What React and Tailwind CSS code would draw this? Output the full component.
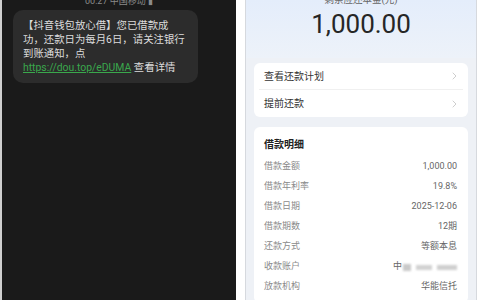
import React from 'react'

const details = [
  { label: '借款金额', value: '1,000.00' },
  { label: '借款年利率', value: '19.8%' },
  { label: '借款日期', value: '2025-12-06' },
  { label: '借款期数', value: '12期' },
  { label: '还款方式', value: '等额本息' },
  { label: '收款账户', value: null },
  { label: '放款机构', value: '华能信托' },
]

const font = { fontFamily: "Roboto, 'Noto Sans CJK SC', sans-serif" }

const Chevron = () => (
  <svg width="5" height="8" viewBox="0 0 5 8" fill="none">
    <path d="M1 1l3 3-3 3" stroke="#c8c8c8" strokeWidth="0.9" strokeLinecap="round" strokeLinejoin="round" />
  </svg>
)

const SmsPanel = () => (
  <div className="w-[236px] h-full bg-[#1a1a1a] border-l-2 border-[#cfcfcf] flex flex-col overflow-hidden">
    <div className="-mt-[5px] h-[12px] text-center text-[9px] leading-[12px] text-[#8a8a8a]">
      00:27 中国移动 ▮
    </div>
    <div className="ml-[11px] mt-[3px] w-[185px] rounded-[10px] bg-[#2c2c2c] px-[10px] pt-[9px] pb-[8px] text-[10.4px] leading-[14px] text-[#dcdcdc]">
      <div>【抖音钱包放心借】您已借款成</div>
      <div>功，还款日为每月6日，请关注银行</div>
      <div>到账通知，点</div>
      <div className="whitespace-nowrap">
        <span className="text-[#3aa84c] underline">https://dou.top/eDUMA</span> 查看详情
      </div>
    </div>
  </div>
)

const LoanPanel = () => (
  <div className="flex h-full">
    <div className="w-[9px] bg-white" />
    <div className="w-[232px] h-full border-x border-[#d6d9de] bg-[#eef1f6] flex flex-col overflow-hidden">
      <div className="h-[58px] shrink-0 bg-gradient-to-b from-[#e4edfb] to-[#edf2f9] flex flex-col items-center">
        <div className="-mt-[6px] text-[9.5px] leading-[12px] text-[#666]">剩余应还本金(元)</div>
        <div className="mt-[3px] text-[26px] leading-[30px] font-normal text-[#262626]">1,000.00</div>
      </div>
      <div className="mx-[8px] mt-[5px] shrink-0 rounded-[6px] bg-white">
        <div className="mx-[5px] flex h-[27px] items-center justify-between border-b border-[#f0f0f0] pl-[5px] pr-[6px]">
          <span className="text-[10px] text-[#333]">查看还款计划</span>
          <Chevron />
        </div>
        <div className="mx-[5px] flex h-[27px] items-center justify-between pl-[5px] pr-[6px]">
          <span className="text-[10px] text-[#333]">提前还款</span>
          <Chevron />
        </div>
      </div>
      <div className="mx-[8px] mt-[10px] shrink-0 rounded-[6px] bg-white px-[10px] pt-[9px] pb-[6px]">
        <div className="h-[18px] text-[10px] leading-[18px] font-bold text-[#222]">借款明细</div>
        <div className="mt-[3px] flex flex-col">
          {details.map((row) => (
            <div key={row.label} className="flex h-[20px] items-center justify-between pr-[1px]">
              <span className="text-[9px] text-[#8a8a8a]">{row.label}</span>
              {row.value ? (
                <span className="text-[9px] text-[#666]">{row.value}</span>
              ) : (
                <span className="flex items-center gap-[1px] text-[9px] text-[#666]">
                  中
                  <span className="h-[7px] w-[8px] bg-[#c9c9c9] blur-[1px]" />
                  <span className="ml-[4px] h-[5px] w-[16px] bg-[#d2d2d2] blur-[1px]" />
                  <span className="ml-[4px] h-[5px] w-[20px] bg-[#cfcfcf] blur-[1px]" />
                </span>
              )}
            </div>
          ))}
        </div>
      </div>
    </div>
    <div className="flex-1 bg-white" />
  </div>
)

export default function App() {
  return (
    <div className="flex h-[300px] w-[480px] overflow-hidden bg-white" style={font}>
      <SmsPanel />
      <div className="flex-1">
        <LoanPanel />
      </div>
    </div>
  )
}
